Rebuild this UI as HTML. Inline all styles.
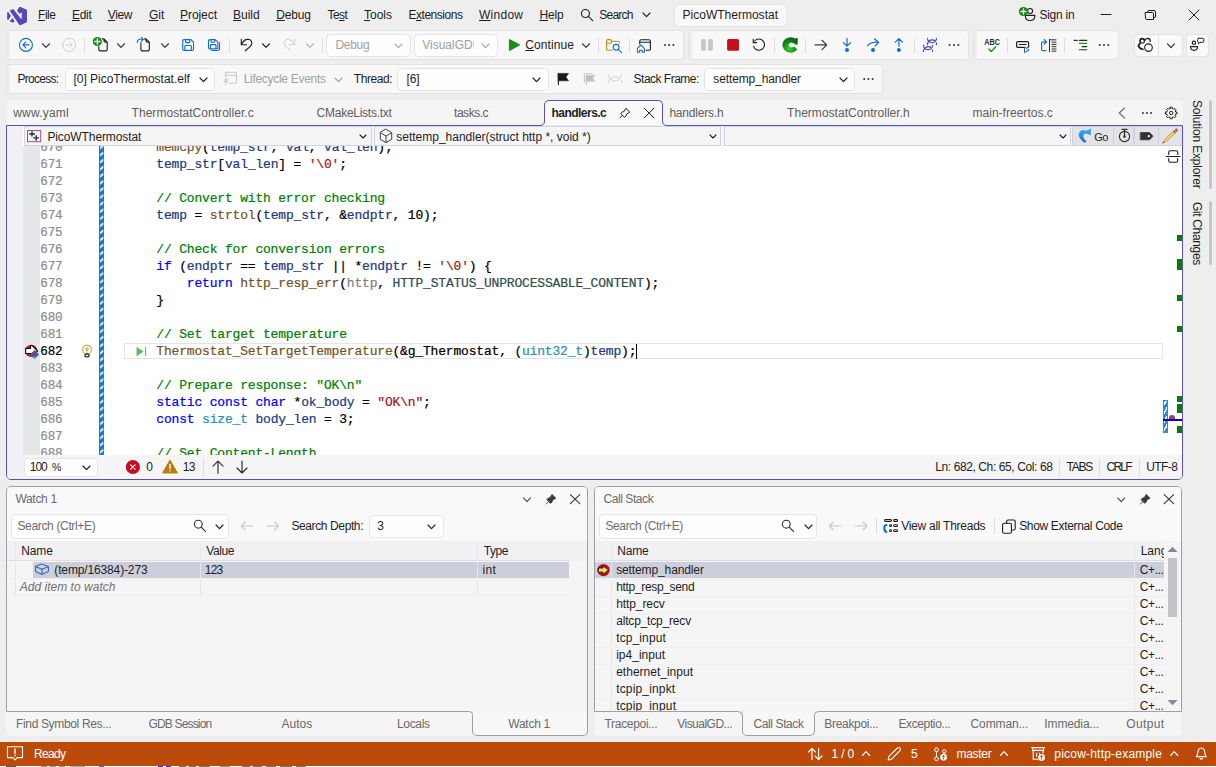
<!DOCTYPE html>
<html><head><meta charset="utf-8"><title>PicoWThermostat</title>
<style>
html,body{margin:0;padding:0;overflow:hidden;}
body{width:1216px;height:767px;overflow:hidden;background:#eeeeee;position:relative;font-family:"Liberation Sans",sans-serif;font-size:12px;color:#1e1e1e;}
.b{position:absolute;box-sizing:border-box;display:block;}
.t{position:absolute;white-space:pre;line-height:16px;height:16px;}
.t u{text-decoration:underline;text-underline-offset:0.6px;text-decoration-thickness:1px;}
.code{position:absolute;white-space:pre;font-family:"Liberation Mono",monospace;font-size:13px;letter-spacing:-0.184px;line-height:17px;height:17px;color:#000;-webkit-text-stroke:0.22px currentColor;}
.lnn{font-size:12.6px;letter-spacing:-0.2px;}
.ln{color:#8c8c8c;}
.kw{color:#0000ff}.cm{color:#008000}.fn{color:#74531f}.lv{color:#1f377f}.pm{color:#808080}.st{color:#a31515}.ty{color:#2b91af}.en{color:#2f4f4f}
</style></head><body>
<span class="t" style="left:38.10px;top:7.00px;font-size:12px;color:#1e1e1e;letter-spacing:-0.512px;"><u>F</u>ile</span>
<span class="t" style="left:71.90px;top:7.00px;font-size:12px;color:#1e1e1e;letter-spacing:-0.226px;"><u>E</u>dit</span>
<span class="t" style="left:107.80px;top:7.00px;font-size:12px;color:#1e1e1e;letter-spacing:-0.365px;"><u>V</u>iew</span>
<span class="t" style="left:149.00px;top:7.00px;font-size:12px;color:#1e1e1e;letter-spacing:-0.067px;"><u>G</u>it</span>
<span class="t" style="left:180.00px;top:7.00px;font-size:12px;color:#1e1e1e;letter-spacing:-0.058px;"><u>P</u>roject</span>
<span class="t" style="left:233.10px;top:7.00px;font-size:12px;color:#1e1e1e;letter-spacing:-0.046px;"><u>B</u>uild</span>
<span class="t" style="left:276.20px;top:7.00px;font-size:12px;color:#1e1e1e;letter-spacing:-0.141px;"><u>D</u>ebug</span>
<span class="t" style="left:327.50px;top:7.00px;font-size:12px;color:#1e1e1e;letter-spacing:-0.536px;">Te<u>s</u>t</span>
<span class="t" style="left:364.00px;top:7.00px;font-size:12px;color:#1e1e1e;letter-spacing:-0.004px;"><u>T</u>ools</span>
<span class="t" style="left:408.40px;top:7.00px;font-size:12px;color:#1e1e1e;letter-spacing:-0.456px;">E<u>x</u>tensions</span>
<span class="t" style="left:479.00px;top:7.00px;font-size:12px;color:#1e1e1e;letter-spacing:0.264px;"><u>W</u>indow</span>
<span class="t" style="left:539.40px;top:7.00px;font-size:12px;color:#1e1e1e;letter-spacing:-0.094px;"><u>H</u>elp</span>
<span class="t" style="left:599.30px;top:7.00px;font-size:12px;color:#1e1e1e;letter-spacing:-0.785px;">Search</span>
<svg class="b" style="left:641.5px;top:12.35px;" width="9.0" height="5.7" viewBox="0 0 9.0 5.7"><path d="M1 1 L4.5 4.7 L8.0 1" fill="none" stroke="#1e1e1e" stroke-width="1.15" stroke-linecap="round" stroke-linejoin="round"/></svg>
<div class="b " style="left:673.5px;top:3.5px;width:113.5px;height:23px;background:#f9f9f9;border:1px solid #e4e4e4;border-radius:4.5px;"></div>
<span class="t" style="left:682.50px;top:7.00px;font-size:12px;color:#1e1e1e;letter-spacing:0.010px;">PicoWThermostat</span>
<span class="t" style="left:1039.40px;top:7.00px;font-size:12px;color:#1e1e1e;letter-spacing:-0.249px;">Sign in</span>
<div class="b " style="left:6px;top:30px;width:678px;height:30px;background:#f8f8f8;border:1px solid #e2e2e2;border-radius:4px;"></div>
<div class="b " style="left:7px;top:31px;width:3px;height:28px;background:#ededed;border-radius:3px 0 0 3px;"></div>
<div class="b " style="left:688px;top:30px;width:281px;height:30px;background:#f8f8f8;border:1px solid #e2e2e2;border-radius:4px;"></div>
<div class="b " style="left:689px;top:31px;width:3px;height:28px;background:#ededed;border-radius:3px 0 0 3px;"></div>
<div class="b " style="left:973px;top:30px;width:146px;height:30px;background:#f8f8f8;border:1px solid #e2e2e2;border-radius:4px;"></div>
<div class="b " style="left:974px;top:31px;width:3px;height:28px;background:#ededed;border-radius:3px 0 0 3px;"></div>
<div class="b " style="left:326px;top:33.5px;width:84.5px;height:23px;background:#fdfdfd;border:1px solid #e4e4e4;border-radius:4.5px;"></div>
<span class="t" style="left:335.40px;top:37.00px;font-size:12px;color:#a0a0a0;letter-spacing:-0.291px;">Debug</span>
<svg class="b" style="left:393.7px;top:42.75px;" width="9.0" height="5.7" viewBox="0 0 9.0 5.7"><path d="M1 1 L4.5 4.7 L8.0 1" fill="none" stroke="#acacac" stroke-width="1.15" stroke-linecap="round" stroke-linejoin="round"/></svg>
<div class="b " style="left:413.5px;top:33.5px;width:84px;height:23px;background:#fdfdfd;border:1px solid #e4e4e4;border-radius:4.5px;"></div>
<div class="b" style="left:422px;top:37px;width:51.5px;height:16px;overflow:hidden"><span class="t" style="left:0.2px;top:0;color:#a0a0a0;letter-spacing:0.003px">VisualGDB</span></div>
<svg class="b" style="left:480.5px;top:42.75px;" width="9.0" height="5.7" viewBox="0 0 9.0 5.7"><path d="M1 1 L4.5 4.7 L8.0 1" fill="none" stroke="#acacac" stroke-width="1.15" stroke-linecap="round" stroke-linejoin="round"/></svg>
<span class="t" style="left:525.30px;top:37.00px;font-size:12px;color:#1e1e1e;letter-spacing:0.095px;"><u>C</u>ontinue</span>
<div class="b " style="left:84px;top:38px;width:1px;height:15px;background:#dfdfdf;"></div>
<div class="b " style="left:229px;top:38px;width:1px;height:15px;background:#dfdfdf;"></div>
<div class="b " style="left:322px;top:38px;width:1px;height:15px;background:#dfdfdf;"></div>
<div class="b " style="left:598px;top:38px;width:1px;height:15px;background:#dfdfdf;"></div>
<div class="b " style="left:629px;top:38px;width:1px;height:15px;background:#dfdfdf;"></div>
<div class="b " style="left:774px;top:38px;width:1px;height:15px;background:#dfdfdf;"></div>
<div class="b " style="left:805px;top:38px;width:1px;height:15px;background:#dfdfdf;"></div>
<div class="b " style="left:914px;top:38px;width:1px;height:15px;background:#dfdfdf;"></div>
<div class="b " style="left:1007px;top:38px;width:1px;height:15px;background:#dfdfdf;"></div>
<div class="b " style="left:1064px;top:38px;width:1px;height:15px;background:#dfdfdf;"></div>
<div class="b " style="left:1133.5px;top:33.5px;width:49px;height:23px;background:#fafafa;border:1px solid #e2e2e2;border-radius:4.5px;"></div>
<div class="b " style="left:1158px;top:34px;width:1px;height:22px;background:#e2e2e2;"></div>
<div class="b " style="left:1185.5px;top:33.5px;width:23px;height:23px;background:#fafafa;border:1px solid #e2e2e2;border-radius:4.5px;"></div>
<div class="b " style="left:6px;top:64px;width:877px;height:30px;background:#f8f8f8;border:1px solid #e2e2e2;border-radius:4px;"></div>
<div class="b " style="left:7px;top:65px;width:3px;height:28px;background:#ededed;border-radius:3px 0 0 3px;"></div>
<span class="t" style="left:17.40px;top:71.00px;font-size:12px;color:#1e1e1e;letter-spacing:-0.698px;">Process:</span>
<div class="b " style="left:64.8px;top:67.5px;width:150.7px;height:23px;background:#fdfdfd;border:1px solid #e4e4e4;border-radius:4.5px;"></div>
<span class="t" style="left:73.40px;top:71.00px;font-size:12px;color:#1e1e1e;letter-spacing:-0.010px;">[0] PicoThermostat.elf</span>
<svg class="b" style="left:198.5px;top:76.75px;" width="9.0" height="5.7" viewBox="0 0 9.0 5.7"><path d="M1 1 L4.5 4.7 L8.0 1" fill="none" stroke="#1e1e1e" stroke-width="1.15" stroke-linecap="round" stroke-linejoin="round"/></svg>
<span class="t" style="left:243.70px;top:71.00px;font-size:12px;color:#a0a0a0;letter-spacing:-0.294px;">Lifecycle Events</span>
<svg class="b" style="left:333.7px;top:76.75px;" width="9.0" height="5.7" viewBox="0 0 9.0 5.7"><path d="M1 1 L4.5 4.7 L8.0 1" fill="none" stroke="#a0a0a0" stroke-width="1.15" stroke-linecap="round" stroke-linejoin="round"/></svg>
<span class="t" style="left:353.80px;top:71.00px;font-size:12px;color:#1e1e1e;letter-spacing:-0.409px;">Thread:</span>
<div class="b " style="left:397.3px;top:67.5px;width:151.5px;height:23px;background:#fdfdfd;border:1px solid #e4e4e4;border-radius:4.5px;"></div>
<span class="t" style="left:406.50px;top:71.00px;font-size:12px;color:#1e1e1e;letter-spacing:-0.071px;">[6]</span>
<svg class="b" style="left:531.5px;top:76.75px;" width="9.0" height="5.7" viewBox="0 0 9.0 5.7"><path d="M1 1 L4.5 4.7 L8.0 1" fill="none" stroke="#1e1e1e" stroke-width="1.15" stroke-linecap="round" stroke-linejoin="round"/></svg>
<span class="t" style="left:633.60px;top:71.00px;font-size:12px;color:#1e1e1e;letter-spacing:-0.514px;">Stack Frame:</span>
<div class="b " style="left:704.3px;top:67.5px;width:151px;height:23px;background:#fdfdfd;border:1px solid #e4e4e4;border-radius:4.5px;"></div>
<span class="t" style="left:713.30px;top:71.00px;font-size:12px;color:#1e1e1e;letter-spacing:-0.114px;">settemp_handler</span>
<svg class="b" style="left:838.7px;top:76.75px;" width="9.0" height="5.7" viewBox="0 0 9.0 5.7"><path d="M1 1 L4.5 4.7 L8.0 1" fill="none" stroke="#1e1e1e" stroke-width="1.15" stroke-linecap="round" stroke-linejoin="round"/></svg>
<div class="b " style="left:7px;top:100px;width:1176px;height:26px;background:#f5f5f5;border-radius:5px 5px 0 0;"></div>
<span class="t" style="left:13.20px;top:105.00px;font-size:12px;color:#5e5e5e;letter-spacing:0.220px;">www.yaml</span>
<span class="t" style="left:131.60px;top:105.00px;font-size:12px;color:#5e5e5e;letter-spacing:0.034px;">ThermostatController.c</span>
<span class="t" style="left:316.60px;top:105.00px;font-size:12px;color:#5e5e5e;letter-spacing:-0.260px;">CMakeLists.txt</span>
<span class="t" style="left:454.00px;top:105.00px;font-size:12px;color:#5e5e5e;letter-spacing:-0.457px;">tasks.c</span>
<span class="t" style="left:669.40px;top:105.00px;font-size:12px;color:#5e5e5e;letter-spacing:-0.193px;">handlers.h</span>
<span class="t" style="left:787.10px;top:105.00px;font-size:12px;color:#5e5e5e;letter-spacing:0.026px;">ThermostatController.h</span>
<span class="t" style="left:972.50px;top:105.00px;font-size:12px;color:#5e5e5e;letter-spacing:0.020px;">main-freertos.c</span>
<div class="b " style="left:6px;top:125px;width:1177px;height:355px;background:#ffffff;border:1px solid #5a4ebb;border-radius:0 0 5px 5px;"></div>
<div class="b" style="left:544px;top:100px;width:118.6px;height:26px;background:#f9f9f9;border:1px solid #5a4ebb;border-bottom:none;border-radius:5px 5px 0 0;"></div>
<svg class="b" style="left:540px;top:121px" width="5" height="5" viewBox="0 0 5 5"><path d="M0 4.5 Q4.5 4.5 4.5 0 L5 0 L5 5 L0 5Z" fill="#f9f9f9"/><path d="M0 4.5 Q4.5 4.5 4.5 0" fill="none" stroke="#5a4ebb" stroke-width="1"/></svg>
<svg class="b" style="left:662px;top:121px" width="5" height="5" viewBox="0 0 5 5"><path d="M5 4.5 Q0.5 4.5 0.5 0 L0 0 L0 5 L5 5Z" fill="#f9f9f9"/><path d="M5 4.5 Q0.5 4.5 0.5 0" fill="none" stroke="#5a4ebb" stroke-width="1"/></svg>
<div class="b " style="left:545px;top:125px;width:117px;height:1px;background:#e9e9f1;"></div>
<span class="t" style="left:551.50px;top:105.00px;font-size:12px;color:#1e1e1e;letter-spacing:-0.525px;font-weight:700;">handlers.c</span>
<div class="b " style="left:7px;top:126px;width:16.4px;height:353px;background:#f0f0f6;border-radius:0 0 0 4px;"></div>
<div class="b " style="left:24px;top:126px;width:1158px;height:20px;background:#f5f5f5;"></div>
<div class="b " style="left:24px;top:126px;width:347.5px;height:20px;background:#f5f5f5;border:1px solid #d2d2e0;"></div>
<div class="b " style="left:374px;top:126px;width:346.5px;height:20px;background:#f5f5f5;border:1px solid #d2d2e0;"></div>
<div class="b " style="left:723.5px;top:126px;width:347.0px;height:20px;background:#f5f5f5;border:1px solid #d2d2e0;"></div>
<span class="t" style="left:47.40px;top:129.00px;font-size:12px;color:#1e1e1e;letter-spacing:-0.097px;">PicoWThermostat</span>
<span class="t" style="left:396.30px;top:129.00px;font-size:12px;color:#1e1e1e;letter-spacing:-0.010px;">settemp_handler(struct http *, void *)</span>
<svg class="b" style="left:359.0px;top:133.7px;" width="8.0" height="5.0" viewBox="0 0 8.0 5.0"><path d="M1 1 L4.0 4.0 L7.0 1" fill="none" stroke="#1e1e1e" stroke-width="1.1" stroke-linecap="round" stroke-linejoin="round"/></svg>
<svg class="b" style="left:708.7px;top:133.7px;" width="8.0" height="5.0" viewBox="0 0 8.0 5.0"><path d="M1 1 L4.0 4.0 L7.0 1" fill="none" stroke="#1e1e1e" stroke-width="1.1" stroke-linecap="round" stroke-linejoin="round"/></svg>
<svg class="b" style="left:1058.9px;top:133.7px;" width="8.0" height="5.0" viewBox="0 0 8.0 5.0"><path d="M1 1 L4.0 4.0 L7.0 1" fill="none" stroke="#1e1e1e" stroke-width="1.1" stroke-linecap="round" stroke-linejoin="round"/></svg>
<div class="b " style="left:1072px;top:126px;width:110px;height:20px;background:#cfd1e0;"></div>
<div class="b " style="left:1072.6px;top:126.6px;width:40.600000000000136px;height:18.6px;background:#e1e3e9;"></div>
<div class="b " style="left:1114.4px;top:126.6px;width:19.0px;height:18.6px;background:#e1e3e9;"></div>
<div class="b " style="left:1134.6px;top:126.6px;width:23.0px;height:18.6px;background:#e1e3e9;"></div>
<div class="b " style="left:1158.8px;top:126.6px;width:23.200000000000045px;height:18.6px;background:#e1e3e9;"></div>
<span class="t" style="left:1094.30px;top:129.00px;font-size:11px;color:#1e1e1e;letter-spacing:-0.574px;">Go</span>
<div class="b " style="left:23.4px;top:146px;width:16.4px;height:309px;background:#e6e7e8;"></div>
<div class="b" style="left:7px;top:146px;width:1175px;height:309px;overflow:hidden">
<span class="code lnn ln" style="left:33.30px;top:-6.30px">670</span>
<span class="code" style="left:149.37px;top:-7.50px"><span class="fn">memcpy</span>(<span class="lv">temp_str</span>, <span class="lv">val</span>, <span class="lv">val_len</span>);</span>
<span class="code lnn ln" style="left:33.30px;top:10.70px">671</span>
<span class="code" style="left:149.37px;top:9.50px"><span class="lv">temp_str</span>[<span class="lv">val_len</span>] = <span class="st">'\0'</span>;</span>
<span class="code lnn ln" style="left:33.30px;top:27.70px">672</span>
<span class="code lnn ln" style="left:33.30px;top:44.70px">673</span>
<span class="code" style="left:149.37px;top:43.50px"><span class="cm">// Convert with error checking</span></span>
<span class="code lnn ln" style="left:33.30px;top:61.70px">674</span>
<span class="code" style="left:149.37px;top:60.50px"><span class="lv">temp</span> = <span class="fn">strtol</span>(<span class="lv">temp_str</span>, &amp;<span class="lv">endptr</span>, 10);</span>
<span class="code lnn ln" style="left:33.30px;top:78.70px">675</span>
<span class="code lnn ln" style="left:33.30px;top:95.70px">676</span>
<span class="code" style="left:149.37px;top:94.50px"><span class="cm">// Check for conversion errors</span></span>
<span class="code lnn ln" style="left:33.30px;top:112.70px">677</span>
<span class="code" style="left:149.37px;top:111.50px"><span class="kw">if</span> (<span class="lv">endptr</span> == <span class="lv">temp_str</span> || *<span class="lv">endptr</span> != <span class="st">'\0'</span>) {</span>
<span class="code lnn ln" style="left:33.30px;top:129.70px">678</span>
<span class="code" style="left:179.84px;top:128.50px"><span class="kw">return</span> <span class="fn">http_resp_err</span>(<span class="pm">http</span>, <span class="en">HTTP_STATUS_UNPROCESSABLE_CONTENT</span>);</span>
<span class="code lnn ln" style="left:33.30px;top:146.70px">679</span>
<span class="code" style="left:149.37px;top:145.50px">}</span>
<span class="code lnn ln" style="left:33.30px;top:163.70px">680</span>
<span class="code lnn ln" style="left:33.30px;top:180.70px">681</span>
<span class="code" style="left:149.37px;top:179.50px"><span class="cm">// Set target temperature</span></span>
<span class="code lnn" style="left:33.30px;top:197.70px">682</span>
<span class="code" style="left:149.37px;top:196.50px"><span class="fn">Thermostat_SetTargetTemperature</span>(&amp;g_Thermostat, (<span class="ty">uint32_t</span>)<span class="lv">temp</span>);</span>
<span class="code lnn ln" style="left:33.30px;top:214.70px">683</span>
<span class="code lnn ln" style="left:33.30px;top:231.70px">684</span>
<span class="code" style="left:149.37px;top:230.50px"><span class="cm">// Prepare response: "OK\n"</span></span>
<span class="code lnn ln" style="left:33.30px;top:248.70px">685</span>
<span class="code" style="left:149.37px;top:247.50px"><span class="kw">static</span> <span class="kw">const</span> <span class="kw">char</span> *<span class="lv">ok_body</span> = <span class="st">"OK\n"</span>;</span>
<span class="code lnn ln" style="left:33.30px;top:265.70px">686</span>
<span class="code" style="left:149.37px;top:264.50px"><span class="kw">const</span> <span class="ty">size_t</span> <span class="lv">body_len</span> = 3;</span>
<span class="code lnn ln" style="left:33.30px;top:282.70px">687</span>
<span class="code lnn ln" style="left:33.30px;top:299.70px">688</span>
<span class="code" style="left:149.37px;top:298.50px"><span class="cm">// Set Content-Length</span></span>
<div class="b" style="left:117px;top:196.9px;width:1038.5px;height:16.3px;border:1px solid #e2e2f0;"></div>
<div class="b" style="left:629.3px;top:198px;width:1px;height:15px;background:#000"></div>
<svg class="b" style="left:92px;top:0" width="5.3" height="309" viewBox="0 0 5.3 309"><defs><pattern id="hb" x="0" y="-1.9" width="5.3" height="7.08" patternUnits="userSpaceOnUse"><rect width="5.3" height="7.08" fill="#0f78d4"/><path d="M1.1 2.9 L4.2 0.2 L4.2 2.7 L1.1 5.4 Z" fill="#fff"/></pattern></defs><rect width="5.3" height="309" fill="url(#hb)"/></svg>
</div>
<div class="b " style="left:1176.5px;top:235px;width:5.5px;height:6px;background:#008000;"></div>
<div class="b " style="left:1176.5px;top:259px;width:5.5px;height:11px;background:#008000;"></div>
<div class="b " style="left:1176.5px;top:295px;width:5.5px;height:6px;background:#008000;"></div>
<div class="b " style="left:1176.5px;top:326px;width:5.5px;height:6px;background:#008000;"></div>
<div class="b " style="left:1176.5px;top:396px;width:5.5px;height:6px;background:#008000;"></div>
<div class="b " style="left:1176.5px;top:404px;width:5.5px;height:9px;background:#008000;"></div>
<div class="b " style="left:1176.5px;top:426px;width:5.5px;height:7px;background:#008000;"></div>
<div class="b" style="left:1163px;top:400px;width:5px;height:33px;background:repeating-linear-gradient(-60deg,#2b8be0 0 2.6px,#ffffff 2.6px 4.3px);border:1px solid #2b8be0;"></div>
<div class="b " style="left:1169px;top:415px;width:6px;height:6px;background:#a04050;border-radius:3px;"></div>
<div class="b " style="left:1163px;top:419px;width:19px;height:1.5px;background:#0000c8;"></div>
<div class="b" style="left:23.4px;top:455px;width:1158.6px;height:24px;background:#f5f5f5;border-radius:0 0 4px 0;"></div>
<div class="b " style="left:23.8px;top:457.5px;width:74.7px;height:19px;background:#fdfdfd;border:1px solid #e6e6e6;border-radius:4px;"></div>
<span class="t" style="left:29.80px;top:459.00px;font-size:12px;color:#1e1e1e;letter-spacing:-1.011px;">100</span>
<span class="t" style="left:51.90px;top:459.00px;font-size:10.6px;color:#1e1e1e;letter-spacing:0.000px;">%</span>
<svg class="b" style="left:81.5px;top:464.65px;" width="9.0" height="5.7" viewBox="0 0 9.0 5.7"><path d="M1 1 L4.5 4.7 L8.0 1" fill="none" stroke="#1e1e1e" stroke-width="1.15" stroke-linecap="round" stroke-linejoin="round"/></svg>
<span class="t" style="left:146.30px;top:459.00px;font-size:12px;color:#1e1e1e;letter-spacing:0.000px;">0</span>
<span class="t" style="left:182.70px;top:459.00px;font-size:12px;color:#1e1e1e;letter-spacing:-0.548px;">13</span>
<div class="b " style="left:203px;top:459px;width:1px;height:17px;background:#dcdcdc;"></div>
<span class="t" style="left:935.20px;top:459.00px;font-size:12px;color:#1e1e1e;letter-spacing:-0.394px;">Ln: 682, Ch: 65, Col: 68</span>
<span class="t" style="left:1066.50px;top:459.00px;font-size:12px;color:#1e1e1e;letter-spacing:-1.251px;">TABS</span>
<span class="t" style="left:1106.50px;top:459.00px;font-size:12px;color:#1e1e1e;letter-spacing:-1.746px;">CRLF</span>
<span class="t" style="left:1146.20px;top:459.00px;font-size:12px;color:#1e1e1e;letter-spacing:-0.549px;">UTF-8</span>
<div class="b " style="left:1059px;top:459px;width:1px;height:17px;background:#dcdcdc;"></div>
<div class="b " style="left:1099px;top:459px;width:1px;height:17px;background:#dcdcdc;"></div>
<div class="b " style="left:1139px;top:459px;width:1px;height:17px;background:#dcdcdc;"></div>
<span class="t" style="left:1188.9px;top:100.4px;transform-origin:0 0;transform:rotate(90deg) translate(0,-100%);letter-spacing:-0.168px;">Solution Explorer</span>
<span class="t" style="left:1188.9px;top:201.5px;transform-origin:0 0;transform:rotate(90deg) translate(0,-100%);letter-spacing:-0.350px;">Git Changes</span>
<div class="b " style="left:1209px;top:100px;width:3px;height:89px;background:#c6c6c6;border-radius:1.5px;"></div>
<div class="b " style="left:1209px;top:201px;width:3px;height:64px;background:#c6c6c6;border-radius:1.5px;"></div>
<div class="b" style="left:6px;top:486px;width:582px;height:226px;background:#f5f5f5;border:1px solid #9f9f9f;border-radius:5px 5px 0 0;"></div>
<div class="b" style="left:7px;top:487px;width:580px;height:54px;background:#f9f9f9;border-radius:4px 4px 0 0;"></div>
<div class="b" style="left:6px;top:712px;width:582px;height:24px;background:#f5f5f5;border-radius:0 0 5px 5px;"></div>
<div class="b" style="left:472px;top:711px;width:116px;height:25px;background:#f7f7f7;border:1px solid #9f9f9f;border-top:none;border-radius:0 0 5px 5px;"></div>
<svg class="b" style="left:468.5px;top:711px" width="4.5" height="4.5" viewBox="0 0 4.5 4.5"><rect width="4.5" height="4.5" fill="#f6f6f6"/><path d="M0 0.5 Q4 0.5 4 4.5" fill="none" stroke="#9f9f9f" stroke-width="1"/></svg>
<div class="b" style="left:594px;top:486px;width:588px;height:226px;background:#f5f5f5;border:1px solid #9f9f9f;border-radius:5px 5px 0 0;"></div>
<div class="b" style="left:595px;top:487px;width:586px;height:54px;background:#f9f9f9;border-radius:4px 4px 0 0;"></div>
<div class="b" style="left:594px;top:712px;width:588px;height:24px;background:#f5f5f5;border-radius:0 0 5px 5px;"></div>
<div class="b" style="left:741.5px;top:711px;width:73.5px;height:25px;background:#f7f7f7;border:1px solid #9f9f9f;border-top:none;border-radius:0 0 5px 5px;"></div>
<svg class="b" style="left:738.0px;top:711px" width="4.5" height="4.5" viewBox="0 0 4.5 4.5"><rect width="4.5" height="4.5" fill="#f6f6f6"/><path d="M0 0.5 Q4 0.5 4 4.5" fill="none" stroke="#9f9f9f" stroke-width="1"/></svg>
<svg class="b" style="left:814px;top:711px" width="4.5" height="4.5" viewBox="0 0 4.5 4.5"><rect width="4.5" height="4.5" fill="#f6f6f6"/><path d="M0.5 4.5 Q0.5 0.5 4.5 0.5" fill="none" stroke="#9f9f9f" stroke-width="1"/></svg>
<span class="t" style="left:15.40px;top:491.00px;font-size:12px;color:#6a6a6a;letter-spacing:-0.295px;">Watch 1</span>
<span class="t" style="left:603.40px;top:491.00px;font-size:12px;color:#6a6a6a;letter-spacing:-0.413px;">Call Stack</span>
<div class="b " style="left:10.5px;top:513.5px;width:218px;height:25px;background:#fdfdfd;border:1px solid #e6e6e6;border-radius:4px;"></div>
<span class="t" style="left:17.40px;top:518.00px;font-size:12px;color:#6e6e6e;letter-spacing:-0.337px;">Search (Ctrl+E)</span>
<svg class="b" style="left:215.3px;top:523.95px;" width="9.0" height="5.7" viewBox="0 0 9.0 5.7"><path d="M1 1 L4.5 4.7 L8.0 1" fill="none" stroke="#1e1e1e" stroke-width="1.15" stroke-linecap="round" stroke-linejoin="round"/></svg>
<div class="b " style="left:598.5px;top:513.5px;width:218px;height:25px;background:#fdfdfd;border:1px solid #e6e6e6;border-radius:4px;"></div>
<span class="t" style="left:605.40px;top:518.00px;font-size:12px;color:#6e6e6e;letter-spacing:-0.366px;">Search (Ctrl+E)</span>
<svg class="b" style="left:803.5px;top:523.95px;" width="9.0" height="5.7" viewBox="0 0 9.0 5.7"><path d="M1 1 L4.5 4.7 L8.0 1" fill="none" stroke="#1e1e1e" stroke-width="1.15" stroke-linecap="round" stroke-linejoin="round"/></svg>
<span class="t" style="left:291.40px;top:518.00px;font-size:12px;color:#1e1e1e;letter-spacing:-0.384px;">Search Depth:</span>
<div class="b " style="left:368.5px;top:514.5px;width:75px;height:23px;background:#fdfdfd;border:1px solid #e6e6e6;border-radius:4px;"></div>
<span class="t" style="left:377.30px;top:518.00px;font-size:12px;color:#1e1e1e;letter-spacing:0.000px;">3</span>
<svg class="b" style="left:426.5px;top:523.95px;" width="9.0" height="5.7" viewBox="0 0 9.0 5.7"><path d="M1 1 L4.5 4.7 L8.0 1" fill="none" stroke="#1e1e1e" stroke-width="1.15" stroke-linecap="round" stroke-linejoin="round"/></svg>
<div class="b " style="left:876px;top:518px;width:1px;height:16px;background:#dcdcdc;"></div>
<div class="b " style="left:994px;top:518px;width:1px;height:16px;background:#dcdcdc;"></div>
<span class="t" style="left:901.20px;top:518.00px;font-size:12px;color:#1e1e1e;letter-spacing:-0.258px;">View all Threads</span>
<span class="t" style="left:1019.20px;top:518.00px;font-size:12px;color:#1e1e1e;letter-spacing:-0.335px;">Show External Code</span>
<div class="b " style="left:7px;top:541px;width:580px;height:19.5px;background:#f1f1f3;"></div>
<div class="b " style="left:7px;top:560px;width:563px;height:1px;background:#dedee6;"></div>
<div class="b " style="left:15px;top:541px;width:1px;height:54px;background:#e5e5ea;"></div>
<div class="b " style="left:200px;top:541px;width:1px;height:54px;background:#e5e5ea;"></div>
<div class="b " style="left:477px;top:541px;width:1px;height:54px;background:#e5e5ea;"></div>
<span class="t" style="left:21.30px;top:543.00px;font-size:12px;color:#1e1e1e;letter-spacing:-0.137px;">Name</span>
<span class="t" style="left:206.20px;top:543.00px;font-size:12px;color:#1e1e1e;letter-spacing:-0.376px;">Value</span>
<span class="t" style="left:483.80px;top:543.00px;font-size:12px;color:#1e1e1e;letter-spacing:-0.439px;">Type</span>
<div class="b " style="left:33px;top:562px;width:167px;height:16px;background:#cccedb;"></div>
<div class="b " style="left:201px;top:562px;width:276px;height:16px;background:#cccedb;"></div>
<div class="b " style="left:478px;top:562px;width:91px;height:16px;background:#cccedb;"></div>
<span class="t" style="left:54.30px;top:562.00px;font-size:12px;color:#1e1e1e;letter-spacing:-0.140px;">(temp/16384)-273</span>
<span class="t" style="left:204.80px;top:562.00px;font-size:12px;color:#1e1e1e;letter-spacing:-0.811px;">123</span>
<span class="t" style="left:482.40px;top:562.00px;font-size:12px;color:#1e1e1e;letter-spacing:0.363px;">int</span>
<div class="b " style="left:7px;top:578px;width:562px;height:1px;background:#efeff1;"></div>
<div class="b " style="left:7px;top:595px;width:562px;height:1px;background:#efeff1;"></div>
<span class="t" style="left:19.70px;top:579.00px;font-size:12px;color:#717171;letter-spacing:0.026px;font-style:italic;">Add item to watch</span>
<div class="b " style="left:595px;top:541px;width:569px;height:19.5px;background:#f1f1f3;"></div>
<div class="b " style="left:595px;top:560px;width:569px;height:1px;background:#dcdce4;"></div>
<div class="b" style="left:595px;top:541px;width:569px;height:170px;overflow:hidden">
<div class="b " style="left:16px;top:0px;width:1px;height:170px;background:#e5e5ea;"></div>
<div class="b " style="left:539px;top:0px;width:1px;height:170px;background:#e5e5ea;"></div>
<span class="t" style="left:22.20px;top:2.00px;font-size:12px;color:#1e1e1e;letter-spacing:-0.137px;">Name</span>
<span class="t" style="left:545.70px;top:2.00px;font-size:12px;color:#1e1e1e;letter-spacing:0.000px;">Language</span>
<div class="b " style="left:0px;top:21px;width:16px;height:16px;background:#cccedb;"></div>
<div class="b " style="left:17px;top:21px;width:522px;height:16px;background:#cccedb;"></div>
<div class="b " style="left:540px;top:21px;width:29px;height:16px;background:#cccedb;"></div>
<span class="t" style="left:21.20px;top:21.00px;font-size:12px;color:#1e1e1e;letter-spacing:-0.121px;">settemp_handler</span>
<span class="t" style="left:544.80px;top:21.00px;font-size:12px;color:#1e1e1e;letter-spacing:-0.419px;">C+...</span>
<span class="t" style="left:21.20px;top:38.00px;font-size:12px;color:#1e1e1e;letter-spacing:-0.333px;">http_resp_send</span>
<span class="t" style="left:544.80px;top:38.00px;font-size:12px;color:#1e1e1e;letter-spacing:-0.419px;">C+...</span>
<div class="b " style="left:0px;top:37.5px;width:569px;height:1px;background:#efeff1;"></div>
<span class="t" style="left:21.20px;top:55.00px;font-size:12px;color:#1e1e1e;letter-spacing:-0.095px;">http_recv</span>
<span class="t" style="left:544.80px;top:55.00px;font-size:12px;color:#1e1e1e;letter-spacing:-0.419px;">C+...</span>
<div class="b " style="left:0px;top:54.5px;width:569px;height:1px;background:#efeff1;"></div>
<span class="t" style="left:21.20px;top:72.00px;font-size:12px;color:#1e1e1e;letter-spacing:-0.183px;">altcp_tcp_recv</span>
<span class="t" style="left:544.80px;top:72.00px;font-size:12px;color:#1e1e1e;letter-spacing:-0.419px;">C+...</span>
<div class="b " style="left:0px;top:71.5px;width:569px;height:1px;background:#efeff1;"></div>
<span class="t" style="left:21.20px;top:89.00px;font-size:12px;color:#1e1e1e;letter-spacing:0.112px;">tcp_input</span>
<span class="t" style="left:544.80px;top:89.00px;font-size:12px;color:#1e1e1e;letter-spacing:-0.419px;">C+...</span>
<div class="b " style="left:0px;top:88.5px;width:569px;height:1px;background:#efeff1;"></div>
<span class="t" style="left:21.20px;top:106.00px;font-size:12px;color:#1e1e1e;letter-spacing:0.011px;">ip4_input</span>
<span class="t" style="left:544.80px;top:106.00px;font-size:12px;color:#1e1e1e;letter-spacing:-0.419px;">C+...</span>
<div class="b " style="left:0px;top:105.5px;width:569px;height:1px;background:#efeff1;"></div>
<span class="t" style="left:21.20px;top:123.00px;font-size:12px;color:#1e1e1e;letter-spacing:0.005px;">ethernet_input</span>
<span class="t" style="left:544.80px;top:123.00px;font-size:12px;color:#1e1e1e;letter-spacing:-0.419px;">C+...</span>
<div class="b " style="left:0px;top:122.5px;width:569px;height:1px;background:#efeff1;"></div>
<span class="t" style="left:21.20px;top:140.00px;font-size:12px;color:#1e1e1e;letter-spacing:0.163px;">tcpip_inpkt</span>
<span class="t" style="left:544.80px;top:140.00px;font-size:12px;color:#1e1e1e;letter-spacing:-0.419px;">C+...</span>
<div class="b " style="left:0px;top:139.5px;width:569px;height:1px;background:#efeff1;"></div>
<span class="t" style="left:21.20px;top:157.00px;font-size:12px;color:#1e1e1e;letter-spacing:0.176px;">tcpip_input</span>
<span class="t" style="left:544.80px;top:157.00px;font-size:12px;color:#1e1e1e;letter-spacing:-0.419px;">C+...</span>
<div class="b " style="left:0px;top:156.5px;width:569px;height:1px;background:#efeff1;"></div>
</div>
<div class="b " style="left:1168px;top:558px;width:9px;height:59px;background:#c2c3c9;"></div>
<svg class="b" style="left:1167px;top:546px" width="11" height="7" viewBox="0 0 11 7"><path d="M0.5 6 L5.5 0.8 L10.5 6Z" fill="#868999"/></svg>
<svg class="b" style="left:1167px;top:699px" width="11" height="7" viewBox="0 0 11 7"><path d="M0.5 1 L5.5 6.2 L10.5 1Z" fill="#868999"/></svg>
<span class="t" style="left:16.00px;top:716.00px;font-size:12px;color:#6a6a6a;letter-spacing:-0.345px;">Find Symbol Res...</span>
<span class="t" style="left:148.50px;top:716.00px;font-size:12px;color:#6a6a6a;letter-spacing:-0.833px;">GDB Session</span>
<span class="t" style="left:281.50px;top:716.00px;font-size:12px;color:#6a6a6a;letter-spacing:0.028px;">Autos</span>
<span class="t" style="left:397.00px;top:716.00px;font-size:12px;color:#6a6a6a;letter-spacing:-0.338px;">Locals</span>
<span class="t" style="left:508.30px;top:716.00px;font-size:12px;color:#6a6a6a;letter-spacing:-0.262px;">Watch 1</span>
<span class="t" style="left:604.50px;top:716.00px;font-size:12px;color:#6a6a6a;letter-spacing:-0.305px;">Tracepoi...</span>
<span class="t" style="left:677.20px;top:716.00px;font-size:12px;color:#6a6a6a;letter-spacing:-0.507px;">VisualGD...</span>
<span class="t" style="left:753.60px;top:716.00px;font-size:12px;color:#6a6a6a;letter-spacing:-0.413px;">Call Stack</span>
<span class="t" style="left:824.30px;top:716.00px;font-size:12px;color:#6a6a6a;letter-spacing:-0.306px;">Breakpoi...</span>
<span class="t" style="left:898.40px;top:716.00px;font-size:12px;color:#6a6a6a;letter-spacing:-0.373px;">Exceptio...</span>
<span class="t" style="left:970.50px;top:716.00px;font-size:12px;color:#6a6a6a;letter-spacing:-0.098px;">Comman...</span>
<span class="t" style="left:1044.30px;top:716.00px;font-size:12px;color:#6a6a6a;letter-spacing:-0.124px;">Immedia...</span>
<span class="t" style="left:1126.30px;top:716.00px;font-size:12px;color:#6a6a6a;letter-spacing:0.335px;">Output</span>
<div class="b " style="left:0px;top:742px;width:1216px;height:23.5px;background:#bc4b09;"></div>
<div class="b " style="left:0px;top:765.5px;width:1216px;height:1.5px;background:#ffffff;"></div>
<div class="b " style="left:6px;top:765.7px;width:10px;height:1.3px;background:#555;"></div>
<div class="b " style="left:41px;top:765.7px;width:6px;height:1.3px;background:#999;"></div>
<div class="b " style="left:50px;top:765.7px;width:6px;height:1.3px;background:#999;"></div>
<div class="b " style="left:59px;top:765.7px;width:6px;height:1.3px;background:#999;"></div>
<div class="b " style="left:70px;top:765.7px;width:15px;height:1.3px;background:#aaa;"></div>
<div class="b " style="left:99px;top:765.7px;width:5px;height:1.3px;background:#2b7bd8;"></div>
<div class="b " style="left:158px;top:765.7px;width:5px;height:1.3px;background:#3333ee;"></div>
<div class="b " style="left:166px;top:765.7px;width:5px;height:1.3px;background:#3333ee;"></div>
<div class="b " style="left:179px;top:765.7px;width:7px;height:1.3px;background:#777;"></div>
<div class="b " style="left:189px;top:765.7px;width:7px;height:1.3px;background:#777;"></div>
<div class="b " style="left:199px;top:765.7px;width:11px;height:1.3px;background:#777;"></div>
<div class="b " style="left:220px;top:765.7px;width:10px;height:1.3px;background:#996;"></div>
<div class="b " style="left:242px;top:765.7px;width:8px;height:1.3px;background:#777;"></div>
<div class="b " style="left:253px;top:765.7px;width:9px;height:1.3px;background:#777;"></div>
<div class="b " style="left:266px;top:765.7px;width:10px;height:1.3px;background:#777;"></div>
<div class="b " style="left:280px;top:765.7px;width:12px;height:1.3px;background:#777;"></div>
<div class="b " style="left:296px;top:765.7px;width:10px;height:1.3px;background:#777;"></div>
<span class="t" style="left:34.00px;top:746.00px;font-size:12px;color:#ffffff;letter-spacing:-0.647px;">Ready</span>
<span class="t" style="left:831.60px;top:746.00px;font-size:12px;color:#ffffff;letter-spacing:-0.187px;">1 / 0</span>
<span class="t" style="left:910.90px;top:746.00px;font-size:12px;color:#ffffff;letter-spacing:0.000px;">5</span>
<span class="t" style="left:956.50px;top:746.00px;font-size:12px;color:#ffffff;letter-spacing:-0.295px;">master</span>
<span class="t" style="left:1054.30px;top:746.00px;font-size:12px;color:#ffffff;letter-spacing:0.209px;">picow-http-example</span>
<svg class="b" style="left:0;top:0;pointer-events:none" width="1216" height="767" viewBox="0 0 1216 767"><g fill="#5649b5" stroke="#f6f5fb" stroke-width="1.2" paint-order="stroke"><path d="M7.1 12.3 L8.3 11.9 L10.9 15.9 L8.3 19.9 L7.1 19.5Z"/><path d="M9.6 21.3 L12.5 17.9 L14.8 21.5 L12.8 22.8Z"/><path d="M9.6 10.5 L13.3 8.9 L21.6 19.6 L21.8 12.2 L19.6 14 L17 10.5 L19.3 7 L20.6 6.9 L26.4 9.5 Q27 9.8 27 10.5 L27 21.6 Q27 22.2 26.3 22.5 L20.3 25.2 L19 24.6Z"/></g><circle cx="585.45" cy="13.45" r="4.0" stroke="#1e1e1e" fill="none" stroke-width="1.15"/><path d="M588.4 16.4 L592.7 20.7" stroke="#1e1e1e" fill="none" stroke-width="1.15" stroke-linecap="round" stroke-linejoin="round" /><circle cx="1030.1" cy="11.0" r="2.5" stroke="#1e1e1e" fill="none" stroke-width="1.1"/><path d="M1025.3 15.4 L1034.9 15.4 Q1034.9 20.5 1030.1 20.5 Q1025.3 20.5 1025.3 15.4Z" stroke="#1e1e1e" fill="none" stroke-width="1.1" stroke-linecap="round" stroke-linejoin="round" /><circle cx="1023.5" cy="11.5" r="4.6" stroke="none" fill="#0f8a10" stroke-width="1.1"/><path d="M1021 11.5 H1026 M1023.5 9 V14" stroke="#fff" fill="none" stroke-width="1.3" stroke-linecap="round" stroke-linejoin="round" /><path d="M1101 14.5 H1111" stroke="#1e1e1e" fill="none" stroke-width="1" stroke-linecap="round" stroke-linejoin="round" /><path d="M1145.5 12.5 H1152.5 Q1153.5 12.5 1153.5 13.5 V19.5 H1146.5 Q1145.5 19.5 1145.5 18.5Z M1147.5 12 Q1147.5 10.5 1149 10.5 H1154 Q1155.5 10.5 1155.5 12 V17 Q1155.5 17.5 1154 17.5" stroke="#1e1e1e" fill="none" stroke-width="1" stroke-linecap="round" stroke-linejoin="round" /><path d="M1189 10 L1199 20 M1199 10 L1189 20" stroke="#1e1e1e" fill="none" stroke-width="1" stroke-linecap="round" stroke-linejoin="round" /><circle cx="25.95" cy="44.9" r="6.5" stroke="#0f6cd0" fill="none" stroke-width="1.1"/><path d="M29 44.9 H23 M25.6 42.2 L22.9 44.9 L25.6 47.6" stroke="#0f6cd0" fill="none" stroke-width="1.1" stroke-linecap="round" stroke-linejoin="round" /><path d="M42.5 43.75 L46 47.45 L49.5 43.75" stroke="#3a3a3a" fill="none" stroke-width="1.15" stroke-linecap="round" stroke-linejoin="round" /><circle cx="69.15" cy="44.9" r="6.5" stroke="#cfcfcf" fill="none" stroke-width="1.0"/><path d="M66 44.9 H72 M69.5 42.2 L72.2 44.9 L69.5 47.6" stroke="#cfcfcf" fill="none" stroke-width="1.0" stroke-linecap="round" stroke-linejoin="round" /><path d="M102.5 38.9 H104 L107.2 42.2 V49.6 Q107.2 50.9 105.9 50.9 H100.1 Q98.8 50.9 98.8 49.6 V46.5 M104 38.9 V41 Q104 42.2 105.2 42.2 H107.2" stroke="#1e1e1e" fill="none" stroke-width="1.1" stroke-linecap="round" stroke-linejoin="round" /><circle cx="97.4" cy="41.5" r="4.6" stroke="none" fill="#14931a" stroke-width="1.1"/><path d="M94.9 41.5 H99.9 M97.4 39 V44" stroke="#fff" fill="none" stroke-width="1.3" stroke-linecap="round" stroke-linejoin="round" /><path d="M117.5 43.75 L121 47.45 L124.5 43.75" stroke="#3a3a3a" fill="none" stroke-width="1.15" stroke-linecap="round" stroke-linejoin="round" /><path d="M144.5 38.9 H146 L149.3 42.2 V49.6 Q149.3 50.9 148 50.9 H142.2 Q140.9 50.9 140.9 49.6 V42.8 M146 38.9 V41 Q146 42.2 147.2 42.2 H149.3" stroke="#1e1e1e" fill="none" stroke-width="1.1" stroke-linecap="round" stroke-linejoin="round" /><path d="M137.3 42.4 Q137.3 39.3 140.5 39.3 H143.2 M141.3 37.3 L143.4 39.3 L141.3 41.3" stroke="#0f6cd0" fill="none" stroke-width="1.1" stroke-linecap="round" stroke-linejoin="round" /><path d="M161.5 43.75 L165 47.45 L168.5 43.75" stroke="#3a3a3a" fill="none" stroke-width="1.15" stroke-linecap="round" stroke-linejoin="round" /><path d="M184.2 39.6 H190.9 L193.5 42.2 V48.900000000000006 Q193.5 50.400000000000006 192.0 50.400000000000006 H184.2 Q182.7 50.400000000000006 182.7 48.900000000000006 V41.1 Q182.7 39.6 184.2 39.6Z M185.61599999999999 39.6 V41.976 Q185.61599999999999 42.624 186.26399999999998 42.624 H189.17999999999998 Q189.828 42.624 189.828 41.976 V39.6 M184.85999999999999 50.400000000000006 V46.08 Q184.85999999999999 45.432 185.61599999999999 45.432 H190.584 Q191.33999999999997 45.432 191.33999999999997 46.08 V50.400000000000006" stroke="#0f6cd0" fill="none" stroke-width="1.1" stroke-linecap="round" stroke-linejoin="round" /><path d="M210.0 39.6 H215.20000000000002 L217.8 42.2 V47.400000000000006 Q217.8 48.900000000000006 216.3 48.900000000000006 H210.0 Q208.5 48.900000000000006 208.5 47.400000000000006 V41.1 Q208.5 39.6 210.0 39.6Z M211.011 39.6 V41.646 Q211.011 42.204 211.569 42.204 H214.08 Q214.638 42.204 214.638 41.646 V39.6 M210.36 48.900000000000006 V45.18 Q210.36 44.622 211.011 44.622 H215.289 Q215.94 44.622 215.94 45.18 V48.900000000000006" stroke="#0f6cd0" fill="none" stroke-width="1.1" stroke-linecap="round" stroke-linejoin="round" /><path d="M219.5 42.5 V48.3 Q219.5 50.5 217.3 50.5 H211.5" stroke="#0f6cd0" fill="none" stroke-width="1.1" stroke-linecap="round" stroke-linejoin="round" /><path d="M241.3 39.3 V44.7 H246.6 M241.6 44.3 Q244 39.3 247.6 39.3 Q251.8 39.5 251.8 43.3 Q251.8 45 250 46.6 L245.3 50.8" stroke="#1e1e1e" fill="none" stroke-width="1.15" stroke-linecap="round" stroke-linejoin="round" /><path d="M262.5 43.75 L266 47.45 L269.5 43.75" stroke="#2a2a2a" fill="none" stroke-width="1.15" stroke-linecap="round" stroke-linejoin="round" /><path d="M294.6 39.3 V44.7 H289.3 M294.3 44.3 Q291.9 39.3 288.3 39.3 Q284.1 39.5 284.1 43.3 Q284.1 45 285.9 46.6 L290.6 50.8" stroke="#cdcdcd" fill="none" stroke-width="1.0" stroke-linecap="round" stroke-linejoin="round" /><path d="M306.5 43.75 L310 47.45 L313.5 43.75" stroke="#b4b4b4" fill="none" stroke-width="1.15" stroke-linecap="round" stroke-linejoin="round" /><path d="M509.6 39.8 L519.2 44.9 L509.6 50.2Z" stroke="#14931a" fill="#14931a" stroke-width="1.4" stroke-linecap="round" stroke-linejoin="round" /><path d="M582.5 43.75 L586 47.45 L589.5 43.75" stroke="#3a3a3a" fill="none" stroke-width="1.15" stroke-linecap="round" stroke-linejoin="round" /><path d="M606.6 49 V40.8 Q606.6 39.6 607.8 39.6 H610.4 L612 41.3 H618 Q619.3 41.3 619.3 42.6 V43.2 M606.6 43.3 H610.4 L612 41.3 M606.6 49 Q606.6 50.3 607.8 50.3 H612" stroke="#c08a1a" fill="none" stroke-width="1.1" stroke-linecap="round" stroke-linejoin="round" /><circle cx="616.1" cy="47.3" r="2.9" stroke="#0f6cd0" fill="none" stroke-width="1.1"/><path d="M618.2 49.4 L621.6 52.6" stroke="#0f6cd0" fill="none" stroke-width="1.1" stroke-linecap="round" stroke-linejoin="round" /><path d="M646 50.3 H649 Q650.4 50.3 650.4 48.9 V41.2 Q650.4 39.8 649 39.8 H641.1 Q639.7 39.8 639.7 41.2 V44 M639.7 42.3 H650.4" stroke="#1e1e1e" fill="none" stroke-width="1.1" stroke-linecap="round" stroke-linejoin="round" /><path d="M637.4 48.3 L640.9 45 L644.4 48.3 V52.2 H642.2 V50.2 H639.6 V52.2 H637.4Z" stroke="#0f6cd0" fill="none" stroke-width="1.1" stroke-linecap="round" stroke-linejoin="round" /><rect x="664.15" y="44.15" width="1.7" height="1.7" rx="0" fill="#2a2a2a" stroke="none" stroke-width="1"/><rect x="668.35" y="44.15" width="1.7" height="1.7" rx="0" fill="#2a2a2a" stroke="none" stroke-width="1"/><rect x="672.55" y="44.15" width="1.7" height="1.7" rx="0" fill="#2a2a2a" stroke="none" stroke-width="1"/><rect x="701.1" y="39.1" width="4.7" height="11.7" rx="1.6" fill="#c6c6c6" stroke="none" stroke-width="1"/><rect x="708.1" y="39.1" width="4.7" height="11.7" rx="1.6" fill="#c6c6c6" stroke="none" stroke-width="1"/><rect x="727.1" y="39.1" width="11.9" height="11.7" rx="1.6" fill="#c50f1f" stroke="none" stroke-width="1"/><path d="M754.6 41 A5.6 5.6 0 1 1 753.5 46.2 M753.2 39.2 V42.6 H756.6" stroke="#1e1e1e" fill="none" stroke-width="1.1" stroke-linecap="round" stroke-linejoin="round" /><defs><radialGradient id="gg" cx="0.45" cy="0.75" r="0.7"><stop offset="0" stop-color="#2fe02f"/><stop offset="0.5" stop-color="#129a12"/><stop offset="1" stop-color="#0a640a"/></radialGradient></defs><path d="M797.6 38 L797.4 44.6 L795 44.2 Q793.6 42.6 791.5 42.4 Q788.6 42.4 788.4 45 Q788.6 47.8 791.4 47.8 Q793 47.8 794.2 46.8 L797 49.6 Q794.6 52.4 790.6 52.4 Q783.6 52 782.6 45 Q783 38.2 790.4 37.4 Q793 37.4 795 38.8Z" fill="url(#gg)" stroke="#0a6a0a" stroke-width="0.4"/><path d="M815.2 44.9 H826.6 M822 40.3 L826.7 44.9 L822 49.6" stroke="#3a3a3a" fill="none" stroke-width="1.2" stroke-linecap="round" stroke-linejoin="round" /><path d="M847 38.4 V46 M843.4 42.6 L847 46.2 L850.6 42.6" stroke="#0f6cd0" fill="none" stroke-width="1.2" stroke-linecap="round" stroke-linejoin="round" /><circle cx="847" cy="50.1" r="2.0" stroke="none" fill="#0f6cd0" stroke-width="1.1"/><path d="M867.5 45.6 Q871.5 41.6 878.4 42.3 M874.6 39 L878.6 42.3 L875.2 46" stroke="#0f6cd0" fill="none" stroke-width="1.2" stroke-linecap="round" stroke-linejoin="round" /><circle cx="873" cy="50.1" r="2.0" stroke="none" fill="#0f6cd0" stroke-width="1.1"/><path d="M898.9 46.2 V38.8 M895.3 42.2 L898.9 38.6 L902.5 42.2" stroke="#0f6cd0" fill="none" stroke-width="1.2" stroke-linecap="round" stroke-linejoin="round" /><circle cx="898.9" cy="50.1" r="2.0" stroke="none" fill="#0f6cd0" stroke-width="1.1"/><path d="M927.4 38.3 Q927.6 41 929.6 42.1 Q932 43.6 935 41.8 Q936.5 40.5 936.5 38.3" stroke="#0f6cd0" fill="none" stroke-width="1.15" stroke-linecap="round" stroke-linejoin="round" /><path d="M927.4 44.6 Q927.6 41.6 929.6 40.5 Q932 39.1 935 40.5 M936.4 42.9 V44.6" stroke="#6a2fa8" fill="none" stroke-width="1.15" stroke-linecap="round" stroke-linejoin="round" /><path d="M923.4 45.199999999999996 Q923.6 47.9 925.6 49.0 Q928 50.5 931 48.699999999999996 Q932.5 47.4 932.5 45.199999999999996" stroke="#0f6cd0" fill="none" stroke-width="1.15" stroke-linecap="round" stroke-linejoin="round" /><path d="M923.4 51.5 Q923.6 48.5 925.6 47.4 Q928 46.0 931 47.4 M932.4 49.8 V51.5" stroke="#6a2fa8" fill="none" stroke-width="1.15" stroke-linecap="round" stroke-linejoin="round" /><rect x="948.75" y="44.15" width="1.7" height="1.7" rx="0" fill="#2a2a2a" stroke="none" stroke-width="1"/><rect x="953.15" y="44.15" width="1.7" height="1.7" rx="0" fill="#2a2a2a" stroke="none" stroke-width="1"/><rect x="957.55" y="44.15" width="1.7" height="1.7" rx="0" fill="#2a2a2a" stroke="none" stroke-width="1"/><text x="984.3" y="45.3" font-family="Liberation Sans" font-weight="700" font-size="8.2" fill="#2a2a2a" textLength="15.6" lengthAdjust="spacingAndGlyphs">ABC</text><path d="M988.8 49 L991.2 51.4 L995.8 46.8" stroke="#14a01a" fill="none" stroke-width="1.4" stroke-linecap="round" stroke-linejoin="round" /><path d="M1023.5 47.4 H1017.8 Q1016.6 47.4 1016.6 46.2 V42.9 Q1016.6 41.7 1017.8 41.7 H1027.4 Q1028.6 41.7 1028.6 42.9 V46.2 Q1028.6 47.4 1027.8 47.4 M1019.3 44.5 H1026" stroke="#1e1e1e" fill="none" stroke-width="1.2" stroke-linecap="round" stroke-linejoin="round" /><path d="M1024.5 47.2 V52.6 L1028.8 50.3Z" stroke="#0f6cd0" fill="none" stroke-width="1.0" stroke-linecap="round" stroke-linejoin="round" /><path d="M1046 50.6 H1042.8 Q1041.6 50.6 1041.6 49.4 V43 Q1041.6 41.8 1042.8 41.8 H1046.3 M1044.2 39.4 L1046.6 41.8 L1044.2 44.2" stroke="#0f6cd0" fill="none" stroke-width="1.2" stroke-linecap="round" stroke-linejoin="round" /><path d="M1049.5 39.4 V51.6 M1049.5 39.8 H1056 M1052 42.1 H1056 M1052 44.4 H1056 M1052 46.7 H1056 M1052 49 H1056 M1052 51.2 H1056" stroke="#2a2a2a" fill="none" stroke-width="1.0" stroke-linecap="round" stroke-linejoin="round" /><path d="M1074.2 40.4 H1077.3 M1079.4 40.4 H1086.8 M1082.2 46.6 H1086.8 M1079.4 49.7 H1086.8" stroke="#2a2a2a" fill="none" stroke-width="1.1" stroke-linecap="round" stroke-linejoin="round" /><path d="M1079.4 43.4 H1086.8" stroke="#14a01a" fill="none" stroke-width="1.2" stroke-linecap="round" stroke-linejoin="round" /><rect x="1098.95" y="44.15" width="1.7" height="1.7" rx="0" fill="#2a2a2a" stroke="none" stroke-width="1"/><rect x="1103.15" y="44.15" width="1.7" height="1.7" rx="0" fill="#2a2a2a" stroke="none" stroke-width="1"/><rect x="1107.45" y="44.15" width="1.7" height="1.7" rx="0" fill="#2a2a2a" stroke="none" stroke-width="1"/><path d="M1139.9 41.6 Q1139.6 38.4 1142.3 38.4 Q1144.6 38.4 1145 40.4 Q1145.4 38.4 1147.7 38.4 Q1150.4 38.6 1150.3 41.6" stroke="#1e1e1e" fill="none" stroke-width="1.25" stroke-linecap="round" stroke-linejoin="round" /><circle cx="1142.3" cy="40.9" r="2.1" stroke="#1e1e1e" fill="none" stroke-width="1.15"/><path d="M1140 43.4 Q1138.4 44.6 1138.6 46.4 Q1139.6 48.8 1142.8 49.4" stroke="#1e1e1e" fill="none" stroke-width="1.9" stroke-linecap="round" stroke-linejoin="round" /><circle cx="1148.5" cy="47.6" r="3.8" stroke="#1e1e1e" fill="#fff" stroke-width="1.15"/><path d="M1167.5 43.949999999999996 L1171 47.65 L1174.5 43.949999999999996" stroke="#2a2a2a" fill="none" stroke-width="1.15" stroke-linecap="round" stroke-linejoin="round" /><circle cx="1193.9" cy="42.8" r="1.7" stroke="#1e1e1e" fill="none" stroke-width="1.1"/><path d="M1190.4 46.6 H1197.6 Q1197.6 50.4 1194 50.4 Q1190.4 50.4 1190.4 46.6Z" stroke="#1e1e1e" fill="none" stroke-width="1.1" stroke-linecap="round" stroke-linejoin="round" /><path d="M1198.6 38.3 H1202.8 Q1203.8 38.3 1203.8 39.3 V41.4 Q1203.8 42.4 1202.8 42.4 H1200 L1198.4 43.8 V42.4 Q1197.6 42.2 1197.6 41.4 V39.3 Q1197.6 38.3 1198.6 38.3Z" stroke="#1e1e1e" fill="none" stroke-width="1.0" stroke-linecap="round" stroke-linejoin="round" /><path d="M225.4 76.6 V73.6 Q225.4 72.3 226.7 72.3 H235.2 Q236.5 72.3 236.5 73.6 V82 Q236.5 83.3 235.2 83.3 H229.4 M225.4 75.2 H236.5" stroke="#c8c8c8" fill="none" stroke-width="1.1" stroke-linecap="round" stroke-linejoin="round" /><path d="M225 78 H228.4 L227.4 80.6 H229 L224.3 86.8 L225.4 82.4 H223.3Z" stroke="none" fill="#d6d6d6" stroke-width="1.1" stroke-linecap="round" stroke-linejoin="round" /><path d="M558.4 73.4 V84.6" stroke="#1a1a1a" fill="none" stroke-width="1.1" stroke-linecap="round" stroke-linejoin="round" /><path d="M558.4 73.4 H568.5 L565.9 77.1 L568.5 80.8 H558.4Z" stroke="#1a1a1a" fill="#1a1a1a" stroke-width="0.6" stroke-linecap="round" stroke-linejoin="round" /><path d="M584.4 82.6 V73.7 H592.4" stroke="#c8c8c8" fill="none" stroke-width="1.0" stroke-linecap="round" stroke-linejoin="round" /><path d="M586.4 75.3 H595 L592.8 78.3 L595 81.3 H586.4Z" stroke="#c0c0c0" fill="#c0c0c0" stroke-width="0.4" stroke-linecap="round" stroke-linejoin="round" /><path d="M586.4 75.3 V84.6" stroke="#c0c0c0" fill="none" stroke-width="1.0" stroke-linecap="round" stroke-linejoin="round" /><path d="M608.2 75 Q608.6 78 611 79.7 Q615 82.4 619 79.7 Q621.6 77.8 621.7 75 M608.2 82.8 Q608.6 79.4 611.4 77.7 Q615 75.6 619 77.6 M621.5 80.6 V82.8" stroke="#d0d0d0" fill="none" stroke-width="1.0" stroke-linecap="round" stroke-linejoin="round" /><rect x="863.35" y="78.15" width="1.7" height="1.7" rx="0" fill="#2a2a2a" stroke="none" stroke-width="1"/><rect x="867.55" y="78.15" width="1.7" height="1.7" rx="0" fill="#2a2a2a" stroke="none" stroke-width="1"/><rect x="871.75" y="78.15" width="1.7" height="1.7" rx="0" fill="#2a2a2a" stroke="none" stroke-width="1"/><path d="M620.1 117.7 L622.4 115.4 M621 113.3 L622.3 112 L624 111.6 L625.9 108.3 L629.8 112.2 L626.5 114.1 L626.1 115.8 L624.8 117.1Z" stroke="#1e1e1e" fill="none" stroke-width="1.0" stroke-linecap="round" stroke-linejoin="round" /><path d="M644.2 108.1 L654 117.9 M654 108.1 L644.2 117.9" stroke="#1e1e1e" fill="none" stroke-width="1.0" stroke-linecap="round" stroke-linejoin="round" /><path d="M1124.6 108 L1119.2 113 L1124.6 118" stroke="#6a6a6a" fill="none" stroke-width="1.1" stroke-linecap="round" stroke-linejoin="round" /><rect x="1142.0500000000002" y="112.15" width="1.7" height="1.7" rx="0" fill="#2a2a2a" stroke="none" stroke-width="1"/><rect x="1146.15" y="112.15" width="1.7" height="1.7" rx="0" fill="#2a2a2a" stroke="none" stroke-width="1"/><rect x="1150.25" y="112.15" width="1.7" height="1.7" rx="0" fill="#2a2a2a" stroke="none" stroke-width="1"/><path d="M1170.19 107.19 L1172.21 107.19 L1172.18 108.61 L1173.61 109.20 L1174.59 108.17 L1176.03 109.61 L1175.00 110.59 L1175.59 112.02 L1177.01 111.99 L1177.01 114.01 L1175.59 113.98 L1175.00 115.41 L1176.03 116.39 L1174.59 117.83 L1173.61 116.80 L1172.18 117.39 L1172.21 118.81 L1170.19 118.81 L1170.22 117.39 L1168.79 116.80 L1167.81 117.83 L1166.37 116.39 L1167.40 115.41 L1166.81 113.98 L1165.39 114.01 L1165.39 111.99 L1166.81 112.02 L1167.40 110.59 L1166.37 109.61 L1167.81 108.17 L1168.79 109.20 L1170.22 108.61Z" stroke="#1e1e1e" fill="none" stroke-width="1.0" stroke-linecap="round" stroke-linejoin="round" /><circle cx="1171.2" cy="113" r="1.7" stroke="#1e1e1e" fill="none" stroke-width="1.0"/><rect x="27.5" y="130.5" width="13.2" height="11.2" rx="0" fill="#f3f3f5" stroke="#9b4f96" stroke-width="1"/><path d="M29.2 134 H35 M32 131.3 V136.6 M33.2 137.9 H39 M36.2 135.3 V140.8" stroke="#2a2a2a" stroke-width="1.35" fill="none"/><path d="M386 129.3 L391.7 132.6 V139.4 L386 142.6 L380.3 139.4 V132.6Z M380.6 132.8 L386 136 L391.4 132.8 M386 136 V142.4" stroke="#424242" fill="none" stroke-width="1.0" stroke-linecap="round" stroke-linejoin="round" /><defs><linearGradient id="bg1" x1="0" y1="0" x2="0" y2="1"><stop offset="0" stop-color="#36b4f4"/><stop offset="1" stop-color="#1070c8"/></linearGradient></defs><path d="M1091 128.6 L1090.6 135.6 L1088 134 Q1084.6 132.4 1083.4 135 Q1082.6 138.4 1086.6 141.4 L1084.6 142.8 Q1078.2 138.6 1078.8 133.8 Q1080 128.8 1085.8 130.4 L1086.6 130.8Z" fill="url(#bg1)"/><circle cx="1124.5" cy="136.5" r="5.1" stroke="#2a2a2a" fill="none" stroke-width="1.1"/><path d="M1122 129.4 H1127 M1124.5 129.6 V136.2" stroke="#2a2a2a" fill="none" stroke-width="1.2" stroke-linecap="round" stroke-linejoin="round" /><circle cx="1124.5" cy="136.6" r="1.0" stroke="#1e1e1e" fill="#2a2a2a" stroke-width="0.5"/><path d="M1140.6 132.6 H1149.6 L1153 136.2 L1149.6 139.8 H1140.6Z" stroke="#333" fill="#333" stroke-width="0.8" stroke-linecap="round" stroke-linejoin="round" /><circle cx="1148.8" cy="136.2" r="1.1" stroke="none" fill="#fff" stroke-width="1.1"/><g transform="translate(1162.6 143.2) rotate(-43.5)"><path d="M0 0 L3.6 -1.35 H15.6 V1.35 H3.6Z" fill="#f4d45a" stroke="#a87020" stroke-width="0.55"/><path d="M0.4 0 L3.6 -1.2 V1.2Z" fill="#f0b070"/><path d="M15.6 -1.5 H17.2 V1.5 H15.6Z" fill="#3a8a48"/><path d="M17.6 -1.5 H19.6 Q20.4 -1.5 20.4 -0.8 V0.8 Q20.4 1.5 19.6 1.5 H17.6Z" fill="#d85058"/><path d="M0 0 L1.5 -0.6 V0.6Z" fill="#333"/></g><path d="M1166.2 156.5 H1180 M1168.7 154.4 V152.2 Q1168.7 150.8 1170.1 150.8 H1176.3 Q1177.7 150.8 1177.7 152.2 V154.4 M1168.7 158.6 V160.8 Q1168.7 162.2 1170.1 162.2 H1176.3 Q1177.7 162.2 1177.7 160.8 V158.6" stroke="#1e1e1e" fill="none" stroke-width="1.1" stroke-linecap="round" stroke-linejoin="round" /><circle cx="31.2" cy="350.9" r="6.1" stroke="none" fill="#d01020" stroke-width="1.1"/><path d="M25.6 348.4 H30.6 V345.5 H32.2 L37.6 351 L35 353.5 H25.6Z" stroke="#111" fill="#fff" stroke-width="1.1" stroke-linecap="round" stroke-linejoin="round" /><path d="M34.5 350 L39 354.5 L34.5 359 L30 354.5Z" stroke="none" fill="#0f6cc8" stroke-width="1.1" stroke-linecap="round" stroke-linejoin="round" /><path d="M34.5 352 V355.4" stroke="#e01020" fill="none" stroke-width="1.2" stroke-linecap="round" stroke-linejoin="round" /><circle cx="34.5" cy="357" r="0.6" stroke="none" fill="#fff" stroke-width="1.1"/><path d="M84.6 353.6 Q82.5 351.8 82.5 349.3 Q82.8 345.2 87 345 Q91.2 345.2 91.5 349.3 Q91.5 351.8 89.4 353.6Z" stroke="#c8962a" fill="none" stroke-width="1.0" stroke-linecap="round" stroke-linejoin="round" /><circle cx="87" cy="349" r="1.2" stroke="#c8962a" fill="none" stroke-width="0.9"/><path d="M87 350.2 V353.4" stroke="#c8962a" fill="none" stroke-width="0.9" stroke-linecap="round" stroke-linejoin="round" /><rect x="84.9" y="354.2" width="4.2" height="2.6" rx="1.2" fill="#fff" stroke="#222" stroke-width="1.3"/><path d="M137 347.4 L143.2 351.6 L137 355.8Z" stroke="#6ab46a" fill="#6ab46a" stroke-width="0.5" stroke-linecap="round" stroke-linejoin="round" /><path d="M145.6 347.4 V355.8" stroke="#6ab46a" fill="none" stroke-width="1.1" stroke-linecap="round" stroke-linejoin="round" /><circle cx="132.9" cy="467" r="7.1" stroke="none" fill="#c50f1f" stroke-width="1.1"/><path d="M130.7 464.8 L135.1 469.2 M135.1 464.8 L130.7 469.2" stroke="#fff" fill="none" stroke-width="1.2" stroke-linecap="round" stroke-linejoin="round" /><path d="M170 460.6 L177 472.8 H163 Z" stroke="#bc7c0a" fill="#bc7c0a" stroke-width="1.4" stroke-linecap="round" stroke-linejoin="round" /><path d="M170 464.4 V468.6" stroke="#fff" fill="none" stroke-width="1.3" stroke-linecap="round" stroke-linejoin="round" /><circle cx="170" cy="470.8" r="0.75" stroke="none" fill="#fff" stroke-width="1.1"/><path d="M218 473.2 V461.4 M213 466.2 L218 461.2 L223 466.2" stroke="#2a2a2a" fill="none" stroke-width="1.15" stroke-linecap="round" stroke-linejoin="round" /><path d="M242 461 V472.8 M237 468 L242 473 L247 468" stroke="#2a2a2a" fill="none" stroke-width="1.15" stroke-linecap="round" stroke-linejoin="round" /><path d="M523.5 497.84999999999997 L527 501.55 L530.5 497.84999999999997" stroke="#4a4a4a" fill="none" stroke-width="1.15" stroke-linecap="round" stroke-linejoin="round" /><g transform="translate(546 494.2)"><path d="M0.2 9.8 L2.6 7.4 M1 5.2 L2.4 3.8 L4.2 3.4 L6 0.2 L9.8 4 L6.6 5.8 L6.2 7.6 L4.8 9Z" fill="#3a3a3a" stroke="#3a3a3a" stroke-width="0.9" stroke-linejoin="round" stroke-linecap="round"/></g><path d="M570.4 494.6 L579.8 503.6 M579.8 494.6 L570.4 503.6" stroke="#3a3a3a" fill="none" stroke-width="1.15" stroke-linecap="round" stroke-linejoin="round" /><path d="M1117.7 497.84999999999997 L1121.2 501.55 L1124.7 497.84999999999997" stroke="#4a4a4a" fill="none" stroke-width="1.15" stroke-linecap="round" stroke-linejoin="round" /><g transform="translate(1140.2 494.2)"><path d="M0.2 9.8 L2.6 7.4 M1 5.2 L2.4 3.8 L4.2 3.4 L6 0.2 L9.8 4 L6.6 5.8 L6.2 7.6 L4.8 9Z" fill="#3a3a3a" stroke="#3a3a3a" stroke-width="0.9" stroke-linejoin="round" stroke-linecap="round"/></g><path d="M1164.2 494.6 L1173.6 503.6 M1173.6 494.6 L1164.2 503.6" stroke="#3a3a3a" fill="none" stroke-width="1.15" stroke-linecap="round" stroke-linejoin="round" /><circle cx="198.3" cy="524.2" r="3.9" stroke="#2a2a2a" fill="none" stroke-width="1.1"/><path d="M201.20000000000002 527.1 L205.5 531.4000000000001" stroke="#2a2a2a" fill="none" stroke-width="1.1" stroke-linecap="round" stroke-linejoin="round" /><circle cx="786.3" cy="524.2" r="3.9" stroke="#2a2a2a" fill="none" stroke-width="1.1"/><path d="M789.1999999999999 527.1 L793.5 531.4000000000001" stroke="#2a2a2a" fill="none" stroke-width="1.1" stroke-linecap="round" stroke-linejoin="round" /><path d="M252.8 526 H241.3 M245.3 522 L241.3 526 L245.3 530" stroke="#c8c8c8" fill="none" stroke-width="1.1" stroke-linecap="round" stroke-linejoin="round" /><path d="M267 526 H278.6 M274.6 522 L278.6 526 L274.6 530" stroke="#c8c8c8" fill="none" stroke-width="1.1" stroke-linecap="round" stroke-linejoin="round" /><path d="M840.8 526 H829.3 M833.3 522 L829.3 526 L833.3 530" stroke="#c8c8c8" fill="none" stroke-width="1.1" stroke-linecap="round" stroke-linejoin="round" /><path d="M855.2 526 H867 M863 522 L867 526 L863 530" stroke="#c8c8c8" fill="none" stroke-width="1.1" stroke-linecap="round" stroke-linejoin="round" /><rect x="884.65" y="519.55" width="6.699999999999955" height="1.7999999999999772" rx="0.7" fill="none" stroke="#1e1e1e" stroke-width="1.1"/><rect x="893.75" y="519.55" width="3.6999999999999544" height="1.7999999999999772" rx="0.7" fill="none" stroke="#1e1e1e" stroke-width="1.1"/><rect x="889.65" y="524.75" width="1.7999999999999772" height="1.6999999999999544" rx="0.7" fill="none" stroke="#1e1e1e" stroke-width="1.1"/><rect x="893.75" y="524.75" width="3.6999999999999544" height="1.6999999999999544" rx="0.7" fill="none" stroke="#1e1e1e" stroke-width="1.1"/><rect x="889.65" y="529.75" width="1.7999999999999772" height="1.6999999999999544" rx="0.7" fill="none" stroke="#1e1e1e" stroke-width="1.1"/><rect x="893.75" y="529.75" width="3.6999999999999544" height="1.6999999999999544" rx="0.7" fill="none" stroke="#1e1e1e" stroke-width="1.1"/><path d="M886.4 525 Q884.2 525.2 884.3 528.4 Q884.4 531.6 886.4 532" stroke="#0f6cd0" fill="none" stroke-width="2.0" stroke-linecap="round" stroke-linejoin="round" /><path d="M1006.6 523.2 V521.4 Q1006.6 520 1008 520 H1013.8 Q1015.2 520 1015.2 521.4 V528.6 Q1015.2 530 1013.8 530 H1012.4" stroke="#1e1e1e" fill="none" stroke-width="1.1" stroke-linecap="round" stroke-linejoin="round" /><rect x="1002.6" y="523.2" width="8.8" height="10" rx="1.5" fill="none" stroke="#1e1e1e" stroke-width="1.1"/><path d="M42 564.2 L48.4 566.6 V571.6 L42 574.4 L35.6 571.6 V566.6Z M35.8 566.8 L42 569.2 L48.2 566.8 M42 569.2 V574" stroke="#1a62b8" fill="none" stroke-width="1.0" stroke-linecap="round" stroke-linejoin="round" /><circle cx="603.5" cy="570.1" r="6.2" stroke="none" fill="#c0101c" stroke-width="1.1"/><path d="M598.6 568 H603 V565.6 L608.6 570.1 L603 574.6 V572.2 H598.6Z" stroke="#111" fill="#f6d85a" stroke-width="0.9" stroke-linecap="round" stroke-linejoin="round" /><path d="M7.5 746.8 H22.5 V757.6 H17.2 L15 759.8 L12.8 757.6 H7.5Z" stroke="#ffffff" fill="none" stroke-width="1.1" stroke-linecap="round" stroke-linejoin="round" /><path d="M15 749 V753.6" stroke="#ffffff" fill="none" stroke-width="1.4" stroke-linecap="round" stroke-linejoin="round" /><circle cx="15" cy="755.6" r="0.8" stroke="none" fill="#ffffff" stroke-width="1.1"/><path d="M812 759.6 V748.6 M808.6 752 L812 748.4 L815.4 752 M818.6 748.4 V759.4 M815.2 756 L818.6 759.6 L822 756" stroke="#ffffff" fill="none" stroke-width="1.15" stroke-linecap="round" stroke-linejoin="round" /><path d="M862.4 755.5 L866 751.7 L869.6 755.5" stroke="#ffffff" fill="none" stroke-width="1.15" stroke-linecap="round" stroke-linejoin="round" /><path d="M1000.4 755.5 L1004 751.7 L1007.6 755.5" stroke="#ffffff" fill="none" stroke-width="1.15" stroke-linecap="round" stroke-linejoin="round" /><path d="M1170.6000000000001 755.5 L1174.2 751.7 L1177.8 755.5" stroke="#ffffff" fill="none" stroke-width="1.15" stroke-linecap="round" stroke-linejoin="round" /><path d="M888.2 760 L888.9 756.4 L897.4 748 Q898.6 747 899.9 748.2 Q901 749.4 900 750.7 L891.6 759.2Z" stroke="#ffffff" fill="none" stroke-width="1.1" stroke-linecap="round" stroke-linejoin="round" /><circle cx="936.5" cy="749.8" r="1.9" stroke="#ffffff" fill="none" stroke-width="1.0"/><circle cx="936.5" cy="758.8" r="1.9" stroke="#ffffff" fill="none" stroke-width="1.0"/><circle cx="944.3" cy="751.4" r="1.7" stroke="#ffffff" fill="none" stroke-width="1.0"/><path d="M936.5 751.8 V756.8 M944.3 753.2 Q944 755.6 941 756" stroke="#ffffff" fill="none" stroke-width="1.0" stroke-linecap="round" stroke-linejoin="round" /><circle cx="943.6" cy="757.2" r="3.4" stroke="none" fill="#ffffff" stroke-width="1.1"/><path d="M943.6 759.2 V755.4 M942 756.8 L943.6 755.2 L945.2 756.8" stroke="#bc4b09" fill="none" stroke-width="0.9" stroke-linecap="round" stroke-linejoin="round" /><path d="M1031.6 747.6 H1044.6 M1032.6 747.6 V750.4 H1043.6 V747.6 M1033.2 750.4 V759.2 H1038 M1043 750.4 V753 M1036.6 753 V756.4 M1039.6 753 V754" stroke="#ffffff" fill="none" stroke-width="1.1" stroke-linecap="round" stroke-linejoin="round" /><circle cx="1041.6" cy="757.4" r="3.4" stroke="none" fill="#ffffff" stroke-width="1.1"/><path d="M1041.6 759.4 V755.6 M1040 757 L1041.6 755.4 L1043.2 757" stroke="#bc4b09" fill="none" stroke-width="0.9" stroke-linecap="round" stroke-linejoin="round" /><path d="M1196.4 756.6 H1206.2 Q1204.8 755 1204.8 752.8 Q1204.6 748.2 1201.3 748 Q1198 748.2 1197.8 752.8 Q1197.8 755 1196.4 756.6Z M1200 758.4 Q1201.3 759.8 1202.6 758.4" stroke="#ffffff" fill="none" stroke-width="1.1" stroke-linecap="round" stroke-linejoin="round" /></svg>
</body></html>
